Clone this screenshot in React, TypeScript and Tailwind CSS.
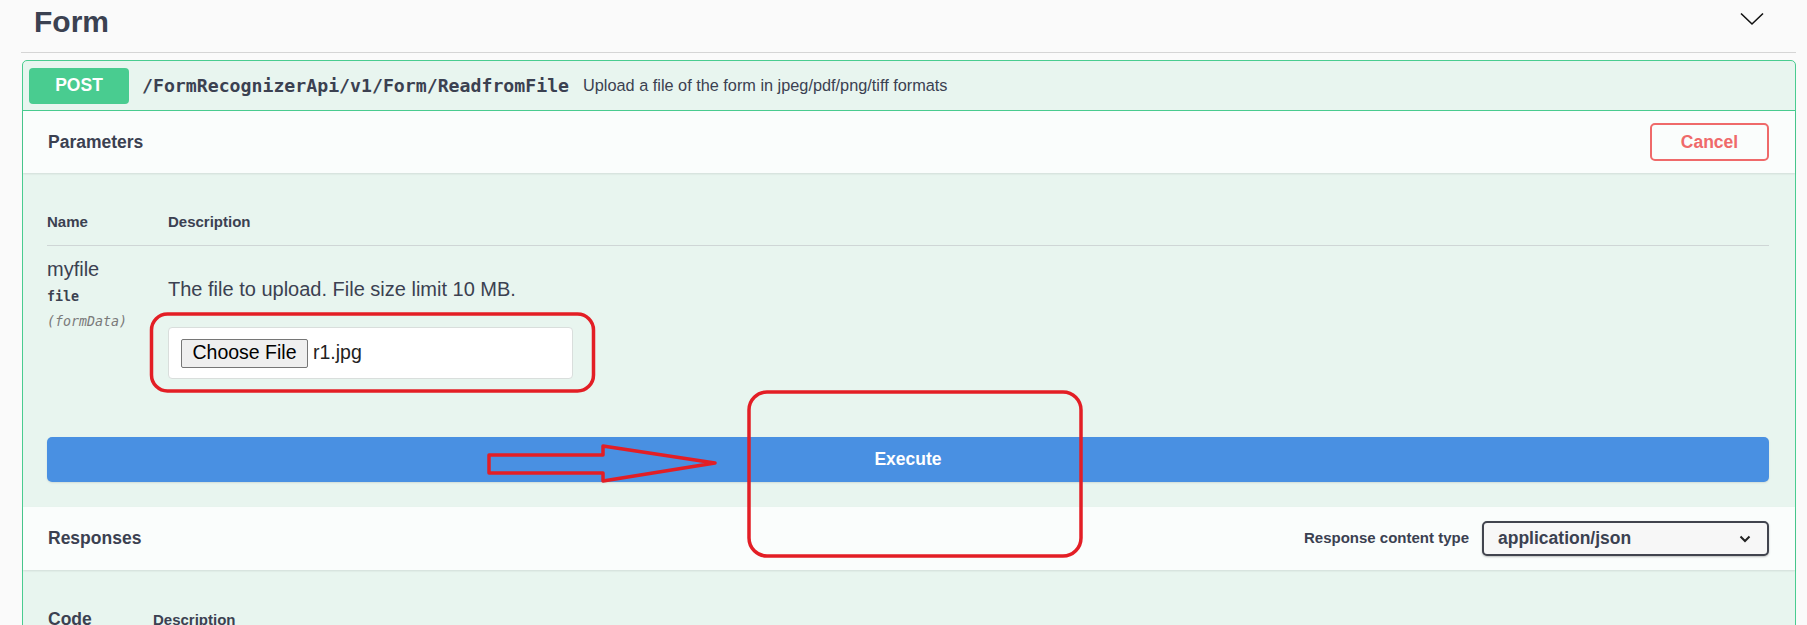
import React from "react";

const sans = "font-['Liberation_Sans',Arial,sans-serif]";
const mono = "font-['DejaVu_Sans_Mono','Liberation_Mono',monospace]";

export default function App() {
  return (
    <div className={`relative w-[1807px] h-[625px] overflow-hidden bg-[#fafafa] text-[#3b4151] ${sans}`}>
      <div className="pl-[21px] pr-[11px]">
        {/* Tag header */}
        <div className="h-[53px] flex items-start justify-between border-b border-[#d5d5d5]">
          <div className="pl-[13px] pt-[4px] text-[30px] leading-[36px] font-bold text-[#3b4151]">Form</div>
          <svg width="24" height="14" viewBox="0 0 24 14" className="mt-[12px] mr-[32px]">
            <polyline points="1,1.5 12,12 23,1.5" fill="none" stroke="#111" strokeWidth="1.6" />
          </svg>
        </div>

        {/* Opblock */}
        <div className="mt-[7px] ml-px border border-[#49cc90] rounded-[5px] bg-[#e8f5ef]">
          {/* Summary */}
          <div className="h-[50px] flex items-center border-b border-[#49cc90] pl-[6px]">
            <div className="w-[100px] h-[36px] rounded-[4px] bg-[#49cc90] text-white font-bold text-[17.5px] flex items-center justify-center">
              POST
            </div>
            <div className={`ml-[13px] ${mono} font-bold text-[18.2px] text-[#3b4151]`}>
              /FormRecognizerApi/v1/Form/ReadfromFile
            </div>
            <div className="ml-[14px] text-[16.3px] text-[#3b4151]">
              Upload a file of the form in jpeg/pdf/png/tiff formats
            </div>
          </div>

          {/* Parameters header */}
          <div className="h-[62px] flex items-center justify-between pl-[25px] pr-[26px] bg-[#fafdfc] shadow-[0_1px_2px_rgba(0,0,0,0.1)]">
            <div className="text-[17.5px] font-bold">Parameters</div>
            <button className="w-[119px] h-[38px] border-2 border-[#ef6a6a] rounded-[5px] bg-transparent text-[#ef6a6a] font-bold text-[17.5px]">
              Cancel
            </button>
          </div>

          {/* Parameters body */}
          <div className="pl-[24px] pr-[26px] pb-[25px]">
            <div className="flex pt-[40px] pb-[14px] border-b border-[#cfd6d6] text-[15px] font-bold leading-[18px]">
              <div className="w-[121px]">Name</div>
              <div>Description</div>
            </div>
            <div className="flex">
              <div className="w-[121px] pt-[11px]">
                <div className="text-[20px] leading-[24px]">myfile</div>
                <div className={`${mono} font-bold text-[13.3px] leading-[20px] mt-[6px]`}>file</div>
                <div className={`${mono} italic text-[13.3px] leading-[20px] mt-[5px] text-[#7a7a7a]`}>(formData)</div>
              </div>
              <div className="pt-[31px]">
                <div className="text-[20px] leading-[24px]">The file to upload. File size limit 10 MB.</div>
                <div className="mt-[26px] w-[405px] h-[52px] bg-white border border-[#d9dedc] rounded-[4px] flex items-center pl-[12px]">
                  <div className="w-[127px] h-[29px] border border-[#767676] bg-[#efefef] rounded-[2px] flex items-center justify-center text-[19.5px] text-black">
                    Choose File
                  </div>
                  <span className="ml-[5px] text-[19.5px] text-[#222]">r1.jpg</span>
                </div>
              </div>
            </div>
            <div className="mt-[58px] h-[45px] rounded-[5px] bg-[#4990e2] text-white font-bold text-[17.5px] flex items-center justify-center shadow-[0_1px_2px_rgba(0,0,0,0.1)]">
              Execute
            </div>
          </div>

          {/* Responses header */}
          <div className="h-[63px] flex items-center justify-between pl-[25px] pr-[26px] bg-[#fafdfc] shadow-[0_1px_2px_rgba(0,0,0,0.1)]">
            <div className="text-[17.5px] font-bold">Responses</div>
            <div className="flex items-center">
              <span className="text-[15px] font-bold mr-[13px]">Response content type</span>
              <div className="w-[287px] h-[35px] border-2 border-[#41444e] rounded-[5px] bg-[#f7f7f7] shadow-[0_1px_2px_rgba(0,0,0,0.25)] flex items-center justify-between pl-[14px] pr-[16px]">
                <span className="text-[17.5px] font-bold">application/json</span>
                <svg width="12" height="8" viewBox="0 0 12 8">
                  <polyline points="1.5,1.5 6,6 10.5,1.5" fill="none" stroke="#222" strokeWidth="2" />
                </svg>
              </div>
            </div>
          </div>

          {/* Responses body */}
          <div className="pl-[25px] pt-[38px] pb-[40px] flex items-end font-bold">
            <div className="w-[105px] text-[17.5px] leading-[22px]">Code</div>
            <div className="text-[15px] leading-[20px]">Description</div>
          </div>
        </div>
      </div>

      {/* Red annotations */}
      <svg className="absolute left-0 top-0 pointer-events-none" width="1807" height="625" viewBox="0 0 1807 625">
        <rect x="151.5" y="314" width="442" height="77" rx="16" fill="none" stroke="#e31e25" strokeWidth="3.5" />
        <rect x="749" y="392" width="332" height="164" rx="18" fill="none" stroke="#e31e25" strokeWidth="3.5" />
        <polygon
          points="489,455 603,455 603,446 715,463 603,481 603,473 489,473"
          fill="none"
          stroke="#e31e25"
          strokeWidth="3.5"
          strokeLinejoin="round"
        />
      </svg>
    </div>
  );
}
